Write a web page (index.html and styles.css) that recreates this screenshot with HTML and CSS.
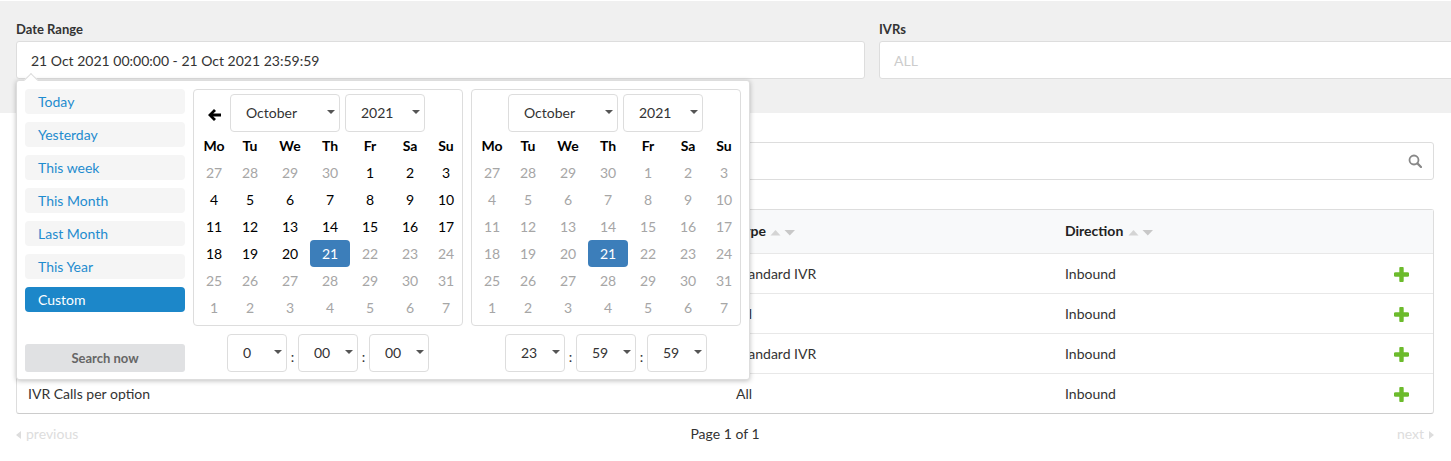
FILE: index.html
```html
<!DOCTYPE html>
<html>
<head>
<meta charset="utf-8"/>
<title>IVR Reports</title>
<link rel="stylesheet" href="styles.css">
</head>
<body>

<div class="filters">
  <div class="filter filter-date">
    <label class="filter-label">Date Range</label>
    <div class="field">21 Oct 2021 00:00:00 - 21 Oct 2021 23:59:59</div>
  </div>
  <div class="filter filter-ivr">
    <label class="filter-label">IVRs</label>
    <div class="field field-empty">ALL</div>
  </div>
</div>

<div class="picker">
  <span class="picker-notch"></span>
  <div class="presets">
    <ul class="preset-list">
      <li class="preset">Today</li>
      <li class="preset">Yesterday</li>
      <li class="preset">This week</li>
      <li class="preset">This Month</li>
      <li class="preset">Last Month</li>
      <li class="preset">This Year</li>
      <li class="preset preset-active">Custom</li>
    </ul>
    <button class="search-now">Search now</button>
  </div>

  <div class="cal-col">
    <div class="cal">
      <div class="cal-head">
        <span class="cal-prev">
          <svg width="13" height="12" viewBox="0 0 13 12"><path d="M6 0 8 2 5.2 4.4H13V7.6H5.2L8 10 6 12 0 6Z" fill="#000"/></svg>
        </span>
        <div class="pick pick-month">October</div>
        <div class="pick pick-year">2021</div>
      </div>
      <div class="cal-grid">
        <b>Mo</b><b>Tu</b><b>We</b><b>Th</b><b>Fr</b><b>Sa</b><b>Su</b>
        <i>27</i><i>28</i><i>29</i><i>30</i><span>1</span><span>2</span><span>3</span>
        <span>4</span><span>5</span><span>6</span><span>7</span><span>8</span><span>9</span><span>10</span>
        <span>11</span><span>12</span><span>13</span><span>14</span><span>15</span><span>16</span><span>17</span>
        <span>18</span><span>19</span><span>20</span><em>21</em><i>22</i><i>23</i><i>24</i>
        <i>25</i><i>26</i><i>27</i><i>28</i><i>29</i><i>30</i><i>31</i>
        <i>1</i><i>2</i><i>3</i><i>4</i><i>5</i><i>6</i><i>7</i>
      </div>
    </div>
    <div class="time">
      <div class="pick pick-time">0</div><span class="colon">:</span>
      <div class="pick pick-time">00</div><span class="colon">:</span>
      <div class="pick pick-time">00</div>
    </div>
  </div>

  <div class="cal-col">
    <div class="cal">
      <div class="cal-head">
        <span class="cal-prev"></span>
        <div class="pick pick-month">October</div>
        <div class="pick pick-year">2021</div>
      </div>
      <div class="cal-grid">
        <b>Mo</b><b>Tu</b><b>We</b><b>Th</b><b>Fr</b><b>Sa</b><b>Su</b>
        <i>27</i><i>28</i><i>29</i><i>30</i><i>1</i><i>2</i><i>3</i>
        <i>4</i><i>5</i><i>6</i><i>7</i><i>8</i><i>9</i><i>10</i>
        <i>11</i><i>12</i><i>13</i><i>14</i><i>15</i><i>16</i><i>17</i>
        <i>18</i><i>19</i><i>20</i><em>21</em><i>22</i><i>23</i><i>24</i>
        <i>25</i><i>26</i><i>27</i><i>28</i><i>29</i><i>30</i><i>31</i>
        <i>1</i><i>2</i><i>3</i><i>4</i><i>5</i><i>6</i><i>7</i>
      </div>
    </div>
    <div class="time">
      <div class="pick pick-time">23</div><span class="colon">:</span>
      <div class="pick pick-time">59</div><span class="colon">:</span>
      <div class="pick pick-time">59</div>
    </div>
  </div>
</div>

<div class="content">
  <div class="search">
    <svg width="14" height="14" viewBox="0 0 14 14"><circle cx="6" cy="6" r="4.5" fill="none" stroke="#888" stroke-width="1.8"/><path d="M9.4 9.4 13 13" stroke="#888" stroke-width="2.2" stroke-linecap="round"/></svg>
  </div>

  <div class="table">
    <div class="row row-head">
      <div class="cell"></div>
      <div class="cell">Type <svg class="sort" width="26" height="8" viewBox="0 0 26 8"><path d="M0.5 6.5 5.5 1 10.5 6.5Z" fill="#d4d4d4"/><path d="M14.5 1H25L19.8 6.5Z" fill="#c8c8c8"/></svg></div>
      <div class="cell">Direction <svg class="sort" width="26" height="8" viewBox="0 0 26 8"><path d="M0.5 6.5 5.5 1 10.5 6.5Z" fill="#d4d4d4"/><path d="M14.5 1H25L19.8 6.5Z" fill="#c8c8c8"/></svg></div>
      <div class="cell"></div>
    </div>
    <div class="row">
      <div class="cell"></div>
      <div class="cell">Standard IVR</div>
      <div class="cell">Inbound</div>
      <div class="cell cell-action"><svg width="15" height="15" viewBox="0 0 15 15"><path d="M7.5 1.5V13.5M1.5 7.5H13.5" stroke="#6cbb2c" stroke-width="4.4" stroke-linecap="round"/></svg></div>
    </div>
    <div class="row">
      <div class="cell"></div>
      <div class="cell">All</div>
      <div class="cell">Inbound</div>
      <div class="cell cell-action"><svg width="15" height="15" viewBox="0 0 15 15"><path d="M7.5 1.5V13.5M1.5 7.5H13.5" stroke="#6cbb2c" stroke-width="4.4" stroke-linecap="round"/></svg></div>
    </div>
    <div class="row">
      <div class="cell"></div>
      <div class="cell">Standard IVR</div>
      <div class="cell">Inbound</div>
      <div class="cell cell-action"><svg width="15" height="15" viewBox="0 0 15 15"><path d="M7.5 1.5V13.5M1.5 7.5H13.5" stroke="#6cbb2c" stroke-width="4.4" stroke-linecap="round"/></svg></div>
    </div>
    <div class="row">
      <div class="cell">IVR Calls per option</div>
      <div class="cell">All</div>
      <div class="cell">Inbound</div>
      <div class="cell cell-action"><svg width="15" height="15" viewBox="0 0 15 15"><path d="M7.5 1.5V13.5M1.5 7.5H13.5" stroke="#6cbb2c" stroke-width="4.4" stroke-linecap="round"/></svg></div>
    </div>
  </div>

  <div class="pager">
    <span class="pager-prev">previous</span>
    <span class="pager-info">Page 1 of 1</span>
    <span class="pager-next">next</span>
  </div>
</div>

</body>
</html>
```
FILE: styles.css
```css
* {
  box-sizing: border-box;
}

html, body {
  height: 100%;
}

body {
  margin: 0;
  padding-top: 1px;
  overflow: hidden;
  position: relative;
  background-color: white;
  font-family: Lato, "Open Sans", sans-serif;
  font-size: 14px;
  color: #333;
}

/* filter band */
.filters {
  display: flex;
  gap: 14px;
  height: 112px;
  padding: 19px 0 0 16px;
  background-color: #f0f0f0;
}

.filter-date {
  flex: 0 0 849px;
}

.filter-ivr {
  flex: 0 0 600px;
}

.filter-label {
  display: block;
  height: 21px;
  line-height: 19px;
  font-size: 13px;
  font-weight: 700;
}

.field {
  height: 38px;
  padding: 0 14px;
  line-height: 37px;
  background-color: white;
  border: 1px solid #ddd;
  border-radius: 3px;
}

.field-empty {
  color: #ccc;
}

/* date range popup */
.picker {
  position: absolute;
  left: 16px;
  top: 80px;
  display: flex;
  gap: 8px;
  width: 734px;
  height: 300px;
  padding: 8px 8px 7px;
  background-color: white;
  border: 1px solid #ddd;
  border-radius: 3px;
  box-shadow: 0 1px 5px rgba(0, 0, 0, 0.25);
}

.picker-notch {
  position: absolute;
  left: 9px;
  top: -6px;
  width: 10px;
  height: 10px;
  background-color: white;
  border-left: 1px solid #ddd;
  border-top: 1px solid #ddd;
  transform: rotate(45deg);
}

.presets {
  display: flex;
  flex-direction: column;
  justify-content: space-between;
  width: 160px;
}

.preset-list {
  display: flex;
  flex-direction: column;
  gap: 8px;
  margin: 0;
  padding: 0;
  list-style: none;
}

.preset {
  height: 25px;
  padding-left: 13px;
  line-height: 25px;
  color: #1f8ccf;
  background-color: #f5f5f5;
  border-radius: 4px;
}

.preset-active {
  color: white;
  background-color: #1c87c9;
}

.search-now {
  height: 28px;
  padding: 0;
  border: none;
  border-radius: 3px;
  background-color: #e0e1e3;
  color: #666;
  font-family: inherit;
  font-size: 13px;
  font-weight: 700;
}

.cal-col {
  display: flex;
  flex-direction: column;
  gap: 8px;
  width: 270px;
}

.cal {
  height: 237px;
  padding: 4px 0 0 4px;
  border: 1px solid #ddd;
  border-radius: 4px;
}

.cal-head {
  display: flex;
  gap: 5px;
}

.cal-prev {
  display: flex;
  align-items: center;
  justify-content: center;
  width: 22px;
  margin-left: 5px;
  padding-top: 3px;
}

.cal-grid {
  display: grid;
  grid-template-columns: 32px repeat(5, 40px) 32px;
  grid-auto-rows: 27px;
  line-height: 27px;
  text-align: center;
  color: #000;
}

.cal-grid b {
  font-weight: 700;
}

.cal-grid i {
  font-style: normal;
  color: #a6a6a6;
}

.cal-grid em {
  font-style: normal;
  color: white;
  background-color: #3c7eba;
  border-radius: 4px;
}

/* small selects */
.pick {
  position: relative;
  height: 38px;
  padding-left: 15px;
  line-height: 36px;
  color: #333;
  background-color: white;
  border: 1px solid #ddd;
  border-radius: 4px;
}

.pick::after {
  content: "";
  position: absolute;
  right: 4px;
  top: 15px;
  border-left: 4px solid transparent;
  border-right: 4px solid transparent;
  border-top: 4px solid #555;
}

.pick-month {
  width: 110px;
}

.pick-year {
  width: 80px;
}

.pick-time {
  width: 60px;
}

.time {
  display: flex;
  justify-content: center;
}

.colon {
  width: 11px;
  padding-top: 7px;
  line-height: 31px;
  text-align: center;
}

/* report list */
.content {
  padding: 29px 17px 0 16px;
}

.search {
  display: flex;
  align-items: center;
  justify-content: flex-end;
  height: 38px;
  padding-right: 11px;
  border: 1px solid #ddd;
  border-radius: 3px;
}

.table {
  margin-top: 29px;
  border: 1px solid #ddd;
  border-bottom-color: #ccc;
  border-radius: 3px;
}

.row {
  display: grid;
  grid-template-columns: 708px 329px 1fr 64px;
  height: 40px;
  line-height: 40px;
  border-top: 1px solid #e8e8e8;
}

.row-head {
  height: 43px;
  line-height: 42px;
  border-top: none;
  background-color: #f8f9fa;
  font-weight: 700;
  color: #222;
}

.cell {
  padding-left: 11px;
}

.cell-action {
  display: flex;
  align-items: center;
  justify-content: center;
  padding-left: 0;
}

.sort {
  margin-left: 1px;
  vertical-align: -1px;
}

.pager {
  display: grid;
  grid-template-columns: 1fr auto 1fr;
  padding-top: 10px;
  line-height: 20px;
}

.pager-prev {
  color: #ddd;
}

.pager-prev::before {
  content: "";
  display: inline-block;
  margin-right: 5px;
  border-top: 4px solid transparent;
  border-bottom: 4px solid transparent;
  border-right: 5px solid #ddd;
}

.pager-next {
  color: #ddd;
  text-align: right;
}

.pager-next::after {
  content: "";
  display: inline-block;
  margin-left: 5px;
  border-top: 4px solid transparent;
  border-bottom: 4px solid transparent;
  border-left: 5px solid #ddd;
}
```
